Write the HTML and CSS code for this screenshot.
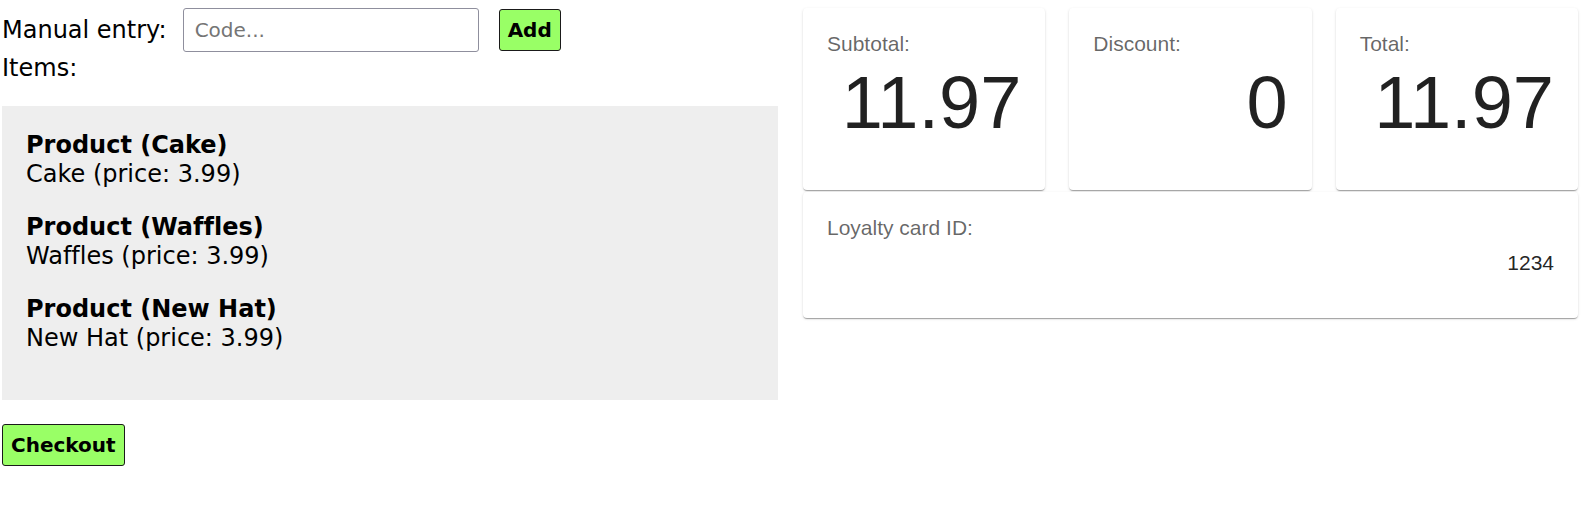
FILE: index.html
```html
<!DOCTYPE html>
<html>
<head>
<meta charset="utf-8">
<link rel="stylesheet" href="styles.css">
</head>
<body>
<div class="page">
  <div class="left">
    <div class="entry-row">
      <label class="entry-label">Manual entry:</label>
      <input class="code-input" type="text" placeholder="Code...">
      <button class="btn btn-add">Add</button>
    </div>
    <div class="items-label">Items:</div>
    <div class="items-box">
      <div class="item">
        <div class="item-title">Product (Cake)</div>
        <div class="item-desc">Cake (price: 3.99)</div>
      </div>
      <div class="item">
        <div class="item-title">Product (Waffles)</div>
        <div class="item-desc">Waffles (price: 3.99)</div>
      </div>
      <div class="item">
        <div class="item-title">Product (New Hat)</div>
        <div class="item-desc">New Hat (price: 3.99)</div>
      </div>
    </div>
    <button class="btn btn-checkout">Checkout</button>
  </div>
  <div class="right">
    <div class="totals">
      <div class="card total-card">
        <div class="card-label">Subtotal:</div>
        <div class="card-number">11.97</div>
      </div>
      <div class="card total-card">
        <div class="card-label">Discount:</div>
        <div class="card-number">0</div>
      </div>
      <div class="card total-card">
        <div class="card-label">Total:</div>
        <div class="card-number">11.97</div>
      </div>
    </div>
    <div class="card loyalty-card">
      <div class="card-label">Loyalty card ID:</div>
      <div class="card-value">1234</div>
    </div>
  </div>
</div>
</body>
</html>
```

FILE: styles.css
```css
html, body {
  margin: 0;
  padding: 0;
  background: #fff;
}

.page {
  display: grid;
  grid-template-columns: 776px 775px;
  column-gap: 25px;
  padding: 8px 11px 0 2px;
  font-family: "DejaVu Sans", sans-serif;
  color: #000;
}

.left {
  display: flex;
  flex-direction: column;
  align-items: flex-start;
  font-variant-ligatures: none;
}

.entry-row {
  display: flex;
  align-items: center;
  height: 44px;
  margin-bottom: 2px;
}

.entry-label {
  font-size: 24px;
  line-height: 28px;
}

.code-input {
  box-sizing: border-box;
  width: 296px;
  height: 44px;
  margin: 0 0 0 16px;
  padding: 0 11px;
  border: 1px solid #8f8f9d;
  border-radius: 3px;
  font-family: "DejaVu Sans", sans-serif;
  font-size: 20px;
  color: #000;
  background: #fff;
  outline: none;
}

.code-input::placeholder {
  color: #757575;
}

.btn {
  box-sizing: border-box;
  height: 42px;
  padding: 0 8px;
  border: 1px solid #1a1a1a;
  border-radius: 3px;
  background: #99ff66;
  font-family: "DejaVu Sans", sans-serif;
  font-weight: bold;
  font-size: 20px;
  color: #000;
}

.btn-add {
  margin-left: 20px;
}

.items-label {
  font-size: 24px;
  line-height: 28px;
}

.items-box {
  box-sizing: border-box;
  align-self: stretch;
  margin-top: 24px;
  background: #eeeeee;
  padding: 25px 24px 1px 24px;
  height: 294px;
}

.item {
  margin-bottom: 24px;
}

.item-title {
  font-weight: bold;
  font-size: 24px;
  line-height: 29px;
}

.item-desc {
  font-size: 24px;
  line-height: 29px;
}

.btn-checkout {
  margin-top: 24px;
}

.right {
  display: flex;
  flex-direction: column;
  gap: 2px;
  font-family: "Liberation Sans", Arial, sans-serif;
}

.totals {
  display: grid;
  grid-template-columns: repeat(3, 1fr);
  column-gap: 24px;
}

.card {
  box-sizing: border-box;
  background: #fff;
  border-radius: 4px;
  box-shadow: 0px 2px 1px -1px rgba(0,0,0,0.2), 0px 1px 1px 0px rgba(0,0,0,0.14), 0px 1px 3px 0px rgba(0,0,0,0.12);
  padding: 24px 24px 43px 24px;
}

.total-card {
  height: 182px;
}

.loyalty-card {
  height: 126px;
}

.card-label {
  font-size: 21px;
  line-height: 24px;
  color: rgba(0,0,0,0.6);
}

.card-number {
  margin-top: 4px;
  font-size: 74px;
  line-height: 85px;
  text-align: right;
  color: rgba(0,0,0,0.87);
}

.card-value {
  margin-top: 11px;
  font-size: 21px;
  line-height: 23px;
  text-align: right;
  color: rgba(0,0,0,0.87);
}
```
